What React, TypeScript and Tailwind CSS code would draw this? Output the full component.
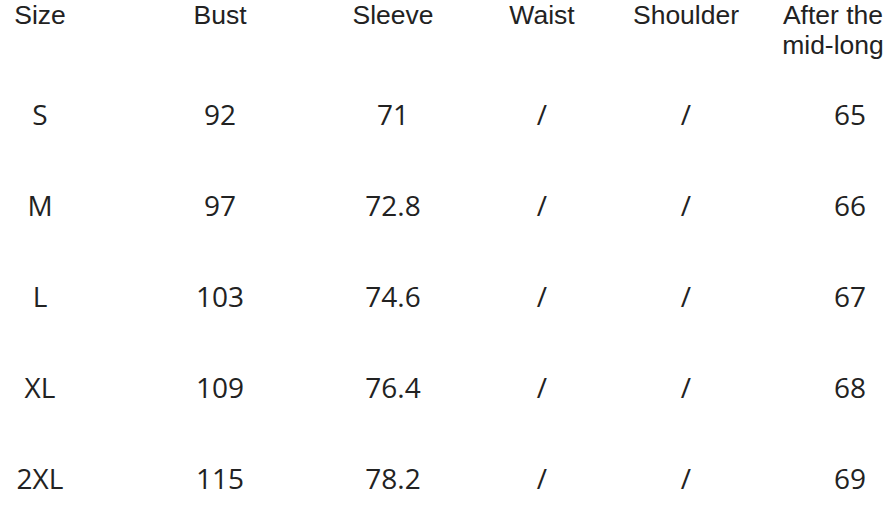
import React from 'react';

const rows = [
  ['S', '92', '71', '/', '/', '65'],
  ['M', '97', '72.8', '/', '/', '66'],
  ['L', '103', '74.6', '/', '/', '67'],
  ['XL', '109', '76.4', '/', '/', '68'],
  ['2XL', '115', '78.2', '/', '/', '69'],
];

const headers = ['Size', 'Bust', 'Sleeve', 'Waist', 'Shoulder'];

export default function App() {
  return (
    <div className="w-[886px] h-[514px] overflow-hidden bg-white text-[#222]">
      {/* header row */}
      <div className="grid grid-cols-[80px_280px_66px_232px_56px_272px] h-[68px] font-['Liberation_Sans',Arial,sans-serif] text-[26.5px] leading-[30px]">
        {headers.map((h) => (
          <div key={h} className="flex justify-center whitespace-nowrap">
            {h}
          </div>
        ))}
        <div className="flex justify-center whitespace-nowrap pr-[34px] text-center">
          <div>
            After the
            <br />
            mid-long
          </div>
        </div>
      </div>

      {/* size rows */}
      {rows.map((r) => (
        <div
          key={r[0]}
          className="grid grid-cols-[80px_280px_66px_232px_56px_272px] h-[91px] items-center font-['Open_Sans',sans-serif] text-[28px] leading-[36px]"
        >
          {r.map((v, i) => (
            <div key={i} className="flex justify-center whitespace-nowrap">
              {v}
            </div>
          ))}
        </div>
      ))}
    </div>
  );
}
